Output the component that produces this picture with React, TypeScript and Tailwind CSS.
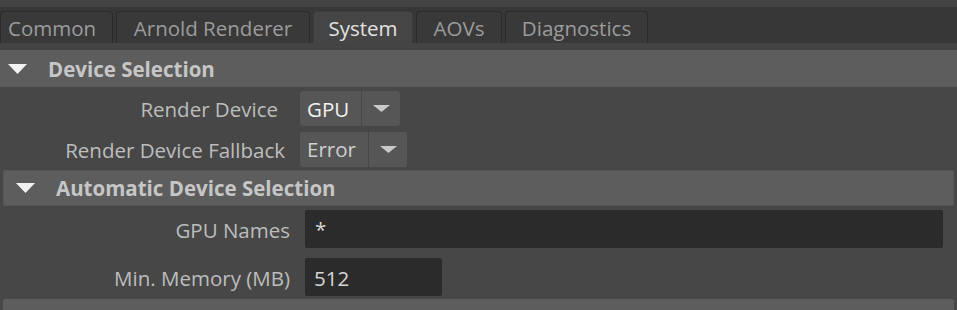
const FONT = { fontFamily: '"Open Sans", "Noto Sans", sans-serif' }

const TABS = [
  { label: 'Common', cls: 'pl-[7px] w-[113px]' },
  { label: 'Arnold Renderer', cls: 'w-[194px] justify-center' },
  { label: 'System', cls: 'w-[100px] justify-center', active: true },
  { label: 'AOVs', cls: 'w-[86px] justify-center' },
  { label: 'Diagnostics', cls: 'w-[143px] justify-center' },
]

function Triangle({ className }: { className: string }) {
  return (
    <svg className={className} viewBox="0 0 19 10" width="19" height="10">
      <polygon points="0,0 19,0 9.5,10" fill="#f2f2f2" />
    </svg>
  )
}

function Dropdown({ value, valueW, bright }: { value: string; valueW: string; bright?: boolean }) {
  return (
    <div className="flex h-[35px] gap-[1px]">
      <div
        className={[
          'h-full flex items-center pl-[7px] pt-[1px] bg-[#565656] rounded-l-[3px] text-[20.5px]',
          valueW,
          bright ? 'text-[#f2f2f2]' : 'text-[#cfcfcf]',
        ].join(' ')}
      >
        {value}
      </div>
      <div className="w-[38px] h-full flex items-center justify-center bg-[#565656] rounded-r-[3px]">
        <svg viewBox="0 0 17 7" width="17" height="7">
          <polygon points="0,0 17,0 8.5,7" fill="#c9c9c9" />
        </svg>
      </div>
    </div>
  )
}

export default function App() {
  return (
    <div className="w-[957px] h-[310px] overflow-hidden bg-[#474747] flex flex-col" style={FONT}>
      {/* top strip */}
      <div className="h-[7px] bg-[#444444] shrink-0" />

      {/* tab bar */}
      <div className="h-[36px] bg-[#373737] flex items-end gap-[3px] shrink-0">
        {TABS.map(t => (
          <div
            key={t.label}
            className={[
              'h-[32px] flex items-center text-[20.5px] border border-b-0 rounded-t-[4px] pt-[1px]',
              t.cls,
              t.active
                ? 'bg-[#454545] border-[#3c3c3c] text-[#e2e2e2]'
                : 'bg-[#393939] border-[#2a2a2a] text-[#9c9c9c]',
            ].join(' ')}
          >
            {t.label}
          </div>
        ))}
      </div>
      <div className="h-[7px] bg-[#444444] shrink-0" />

      {/* Device Selection header */}
      <div className="h-[37px] bg-[#5d5d5d] flex items-center shrink-0">
        <Triangle className="ml-[8px]" />
        <span className="ml-[21px] pt-[1px] text-[20.5px] font-bold text-[#c6c6c6]">Device Selection</span>
      </div>

      {/* rows */}
      <div className="flex items-center mt-[4px] h-[35px]">
        <div className="w-[278px] text-right text-[20.5px] text-[#bdbdbd] pt-[2px]">Render Device</div>
        <div className="ml-[22px]">
          <Dropdown value="GPU" valueW="w-[61px]" bright />
        </div>
      </div>
      <div className="mx-[3px] mt-[3px] h-[1px] bg-[#424242]" />
      <div className="flex items-center mt-[3px] h-[34px]">
        <div className="w-[285px] text-right text-[20.5px] text-[#bdbdbd] pt-[2px]">Render Device Fallback</div>
        <div className="ml-[15px]">
          <Dropdown value="Error" valueW="w-[68px]" />
        </div>
      </div>

      {/* nested section */}
      <div className="mx-[3px] mt-[4px] flex flex-col">
        <div className="h-[36px] bg-[#5d5d5d] rounded-[2px] border border-[#575757] flex items-center">
          <Triangle className="ml-[12px]" />
          <span className="ml-[21px] pt-[1px] text-[20.5px] font-bold text-[#c6c6c6]">Automatic Device Selection</span>
        </div>

        <div className="flex items-center mt-[4px] h-[38px]">
          <div className="w-[287px] text-right text-[20.5px] text-[#bdbdbd] pt-[2px]">GPU Names</div>
          <div className="ml-[15px] w-[638px] h-full bg-[#2b2b2b] rounded-[2px] flex items-center pl-[10px] text-[20.5px] text-[#d6d6d6]">
            *
          </div>
        </div>
        <div className="flex items-center mt-[10px] h-[38px]">
          <div className="w-[287px] text-right text-[20.5px] text-[#bdbdbd] pt-[2px]">Min. Memory (MB)</div>
          <div className="ml-[15px] w-[137px] h-full bg-[#2b2b2b] rounded-[2px] flex items-center pl-[9px] pt-[2px] text-[20.5px] text-[#d6d6d6]">
            512
          </div>
        </div>

        <div className="mt-[3px] h-[36px] bg-[#5d5d5d] rounded-[2px]" />
      </div>
    </div>
  )
}
